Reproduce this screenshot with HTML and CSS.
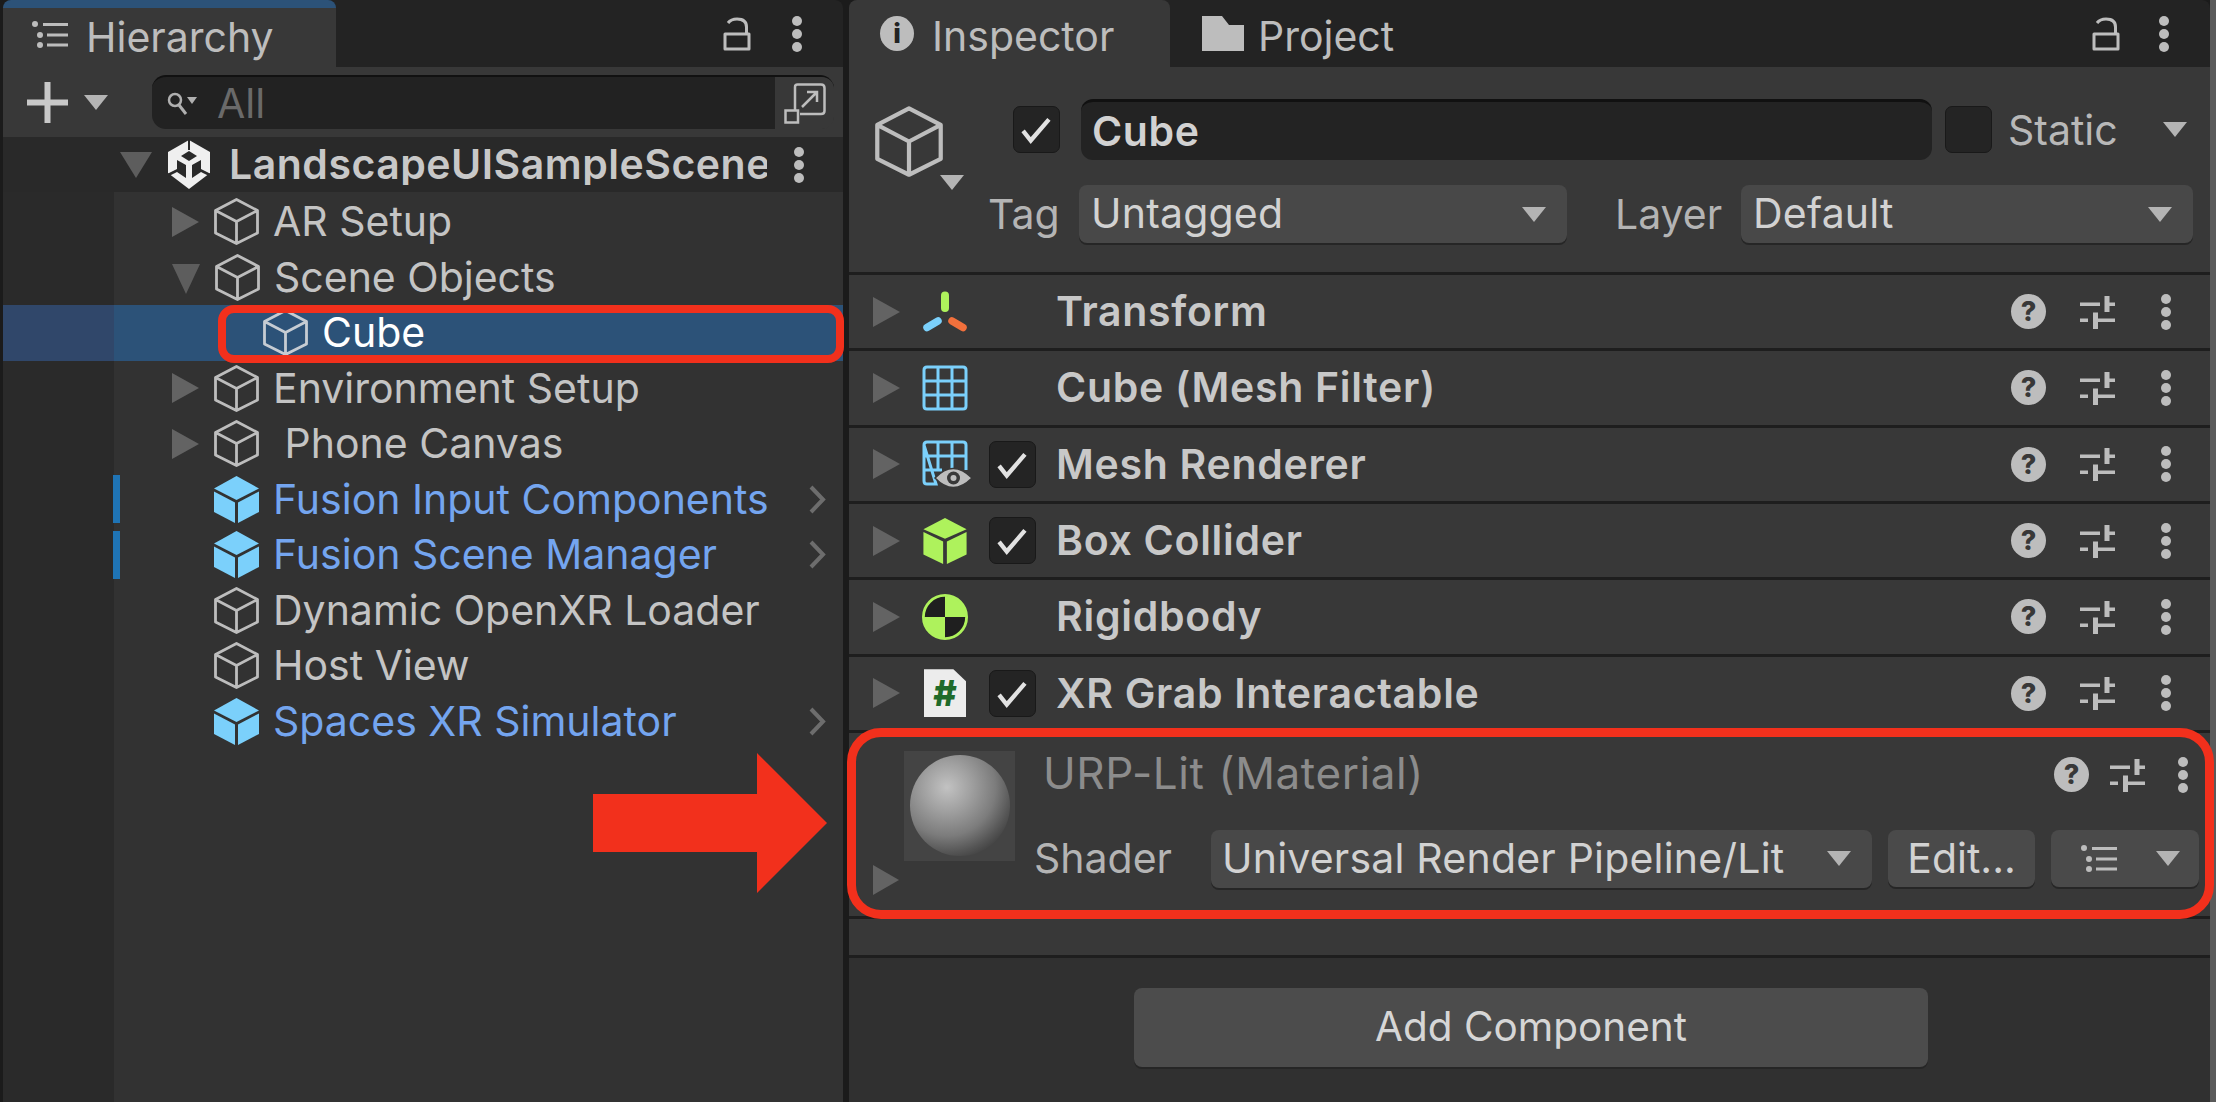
FILE: index.html
```html
<!DOCTYPE html>
<html lang="en">
<head>
<meta charset="utf-8">
<title>Unity Editor</title>
<link rel="stylesheet" href="styles.css">
</head>
<body>
<svg class="defs" width="0" height="0" aria-hidden="true">
  <symbol id="cube" viewBox="0 0 45 47"><path d="M22.500 1.500 43.500 12.500V35L22.500 45.500 1.500 35V12.500ZM1.500 12.500 22.500 23.500 43.500 12.500M22.500 23.500V45.500" fill="none" stroke="currentColor" stroke-width="2.800" stroke-linejoin="round"/></symbol>
  <symbol id="prefab" viewBox="0 0 45 47"><path d="M22.500 0 45 12.500 22.500 24 0 12.500Z" fill="#7bd0fb"/><path d="M0 15.500 21 26.500V47L0 36Z" fill="#7bd0fb"/><path d="M45 15.500 24 26.500V47L45 36Z" fill="#7bd0fb"/></symbol>
  <symbol id="dots" viewBox="0 0 12 36"><circle cx="6" cy="5" r="5"/><circle cx="6" cy="18" r="5"/><circle cx="6" cy="31" r="5"/></symbol>
  <symbol id="lock" viewBox="0 0 28 34"><path d="M5 6Q8 2 14 2 23.500 2 23.500 10V17M2 17H26V32H2Z" fill="none" stroke="currentColor" stroke-width="3" stroke-linejoin="round"/></symbol>
  <symbol id="list" viewBox="0 0 36 27"><circle cx="3" cy="3" r="3"/><circle cx="8" cy="14" r="3"/><circle cx="8" cy="24" r="3"/><path d="M11 2h25v3H11zM15 12.500h21v3H15zM15 22.500h21v3H15z"/></symbol>
  <symbol id="sliders" viewBox="0 0 35 34"><path d="M0 7.500H20V11H0ZM24.500 1H29.500V7.500H35V11H29.500V17H24.500ZM0 23.500H8V27H0ZM13 17.500H18V23.500H35V27H18V34H13Z"/></symbol>
  <symbol id="grid" viewBox="0 0 46 46"><path d="M2 5Q2 2 5 2H41Q44 2 44 5V41Q44 44 41 44H5Q2 44 2 41ZM2 16H44M2 30H44M16 2V44M30 2V44" fill="none" stroke="#7bd0fb" stroke-width="3"/></symbol>
</svg>

<div class="app">
  <section class="panel hierarchy">
    <header class="tabbar">
      <div class="tab tab-hier">
        <svg class="ic-list"><use href="#list"/></svg>
        <span>Hierarchy</span>
      </div>
      <div class="tab-tools tools-hier">
        <svg class="ic-lock"><use href="#lock"/></svg>
        <svg class="ic-dots"><use href="#dots"/></svg>
      </div>
    </header>
    <div class="toolbar">
      <svg class="ic-plus" viewBox="0 0 41 41"><path d="M17.500 0h6v17.500h17.500v6H23.500v17.500h-6V23.500H0v-6h17.500z"/></svg>
      <i class="tri-d tri-plus"></i>
      <div class="search">
        <svg class="ic-search" viewBox="0 0 32 23"><circle cx="8" cy="8" r="6" fill="none" stroke="currentColor" stroke-width="2.500"/><path d="M12 13l7 9" stroke="currentColor" stroke-width="3" fill="none"/><path d="M20 5h10l-5 7z"/></svg>
        <span class="search-text">All</span>
        <div class="search-btn">
          <svg class="ic-scene" viewBox="0 0 42 41"><path d="M11 27V4Q11 1.500 13.500 1.500H37Q40.500 1.500 40.500 5V28Q40.500 31 37 31H16" fill="none" stroke="currentColor" stroke-width="2.500"/><path d="M1.500 27.500H14V39.500H1.500Z" fill="none" stroke="currentColor" stroke-width="2.500"/><path d="M18 24 33 9M23 9H33V19" fill="none" stroke="currentColor" stroke-width="2.500"/></svg>
        </div>
      </div>
    </div>
    <div class="scene-row">
      <i class="tri-d tri-scene"></i>
      <svg class="ic-unity" viewBox="0 0 42 49"><path d="M21 0 42 12V33L21 49 0 33V12Z" fill="#efefef"/><path d="M20 0H22V10H20ZM21 11 29 16 21 21 13 16ZM9 20 18 25V35L9 29ZM33 20 24 25V35L33 29ZM0 33.500 9 29 18 35V38L9 32 0 36.500ZM42 33.500 33 29 24 35V38L33 32 42 36.500Z" fill="#292929"/></svg>
      <span class="scene-name">LandscapeUISampleScene</span>
      <svg class="ic-dots scene-dots"><use href="#dots"/></svg>
    </div>
    <div class="tree">
      <div class="row"><i class="mark"></i><i class="tri-r"></i><svg class="ic-cube"><use href="#cube"/></svg><span>AR Setup</span></div>
      <div class="row"><i class="mark"></i><i class="tri-d tri-row"></i><svg class="ic-cube"><use href="#cube"/></svg><span>Scene Objects</span></div>
      <div class="row selected"><i class="mark"></i><i class="no-tri"></i><svg class="ic-cube child"><use href="#cube"/></svg><span>Cube</span></div>
      <div class="row"><i class="mark"></i><i class="tri-r"></i><svg class="ic-cube"><use href="#cube"/></svg><span>Environment Setup</span></div>
      <div class="row"><i class="mark"></i><i class="tri-r"></i><svg class="ic-cube"><use href="#cube"/></svg><span class="pre"> Phone Canvas</span></div>
      <div class="row prefab"><i class="mark on"></i><i class="no-tri"></i><svg class="ic-cube"><use href="#prefab"/></svg><span>Fusion Input Components</span><svg class="chev" viewBox="0 0 18 29"><path d="M3 2 15 14.500 3 27" fill="none" stroke="currentColor" stroke-width="4"/></svg></div>
      <div class="row prefab"><i class="mark on"></i><i class="no-tri"></i><svg class="ic-cube"><use href="#prefab"/></svg><span>Fusion Scene Manager</span><svg class="chev" viewBox="0 0 18 29"><path d="M3 2 15 14.500 3 27" fill="none" stroke="currentColor" stroke-width="4"/></svg></div>
      <div class="row"><i class="mark"></i><i class="no-tri"></i><svg class="ic-cube"><use href="#cube"/></svg><span>Dynamic OpenXR Loader</span></div>
      <div class="row"><i class="mark"></i><i class="no-tri"></i><svg class="ic-cube"><use href="#cube"/></svg><span>Host View</span></div>
      <div class="row prefab"><i class="mark"></i><i class="no-tri"></i><svg class="ic-cube"><use href="#prefab"/></svg><span>Spaces XR Simulator</span><svg class="chev" viewBox="0 0 18 29"><path d="M3 2 15 14.500 3 27" fill="none" stroke="currentColor" stroke-width="4"/></svg></div>
    </div>
  </section>

  <section class="panel inspector">
    <header class="tabbar">
      <div class="tab tab-insp">
        <span class="ic-info">i</span>
        <span class="tab-label">Inspector</span>
      </div>
      <div class="tab tab-proj">
        <svg class="ic-folder" viewBox="0 0 42 35"><path d="M0 0H20L27 9H42V35H0Z"/></svg>
        <span class="tab-label">Project</span>
      </div>
      <div class="tab-tools tools-insp">
        <svg class="ic-lock"><use href="#lock"/></svg>
        <svg class="ic-dots"><use href="#dots"/></svg>
      </div>
    </header>

    <div class="go-head">
      <div class="go-icon">
        <svg class="ic-bigcube"><use href="#cube"/></svg>
        <i class="tri-d tri-go"></i>
      </div>
      <div class="go-fields">
        <div class="go-line1">
          <label class="check"><svg viewBox="0 0 46 47"><path d="M9 25 17 35 36 13"/></svg></label>
          <div class="namefield"><span>Cube</span></div>
          <label class="check empty"></label>
          <span class="static">Static</span>
          <i class="tri-d tri-static"></i>
        </div>
        <div class="go-line2">
          <span class="lbl lbl-tag">Tag</span>
          <div class="dd dd-tag"><span>Untagged</span><i class="tri-d tri-dd"></i></div>
          <span class="lbl lbl-layer">Layer</span>
          <div class="dd dd-layer"><span>Default</span><i class="tri-d tri-dd"></i></div>
        </div>
      </div>
    </div>

    <div class="comp">
      <i class="tri-r"></i>
      <svg class="c-icon" viewBox="0 0 46 42"><g fill="none" stroke-linecap="round"><path d="M23 4.500V17" stroke="#aef25c" stroke-width="8"/><path d="M5 36.500 16 30" stroke="#7bd0fb" stroke-width="7.500"/><path d="M30 30 41 36.500" stroke="#f2703c" stroke-width="7.500"/></g></svg>
      <i class="c-nocheck"></i>
      <span class="c-name">Transform</span>
      <div class="c-tools"><span class="ic-help">?</span><svg class="ic-sliders"><use href="#sliders"/></svg><svg class="ic-dots"><use href="#dots"/></svg></div>
    </div>
    <div class="comp">
      <i class="tri-r"></i>
      <svg class="c-icon"><use href="#grid"/></svg>
      <i class="c-nocheck"></i>
      <span class="c-name">Cube (Mesh Filter)</span>
      <div class="c-tools"><span class="ic-help">?</span><svg class="ic-sliders"><use href="#sliders"/></svg><svg class="ic-dots"><use href="#dots"/></svg></div>
    </div>
    <div class="comp">
      <i class="tri-r"></i>
      <svg class="c-icon c-icon-wide" viewBox="0 0 50 48"><path d="M2 5Q2 2 5 2H41Q44 2 44 5V30M14 44H5Q2 44 2 41V5ZM2 16H44M2 30H20M16 2V30M30 2V30" fill="none" stroke="#7bd0fb" stroke-width="3"/><path d="M13 38Q31 19 50 38 31 57 13 38Z" fill="#bdbdbd" stroke="#383838" stroke-width="1.500"/><circle cx="31.500" cy="38" r="6.500" fill="#383838"/><circle cx="31.500" cy="38" r="3" fill="#bdbdbd"/></svg>
      <label class="check c-check"><svg viewBox="0 0 46 47"><path d="M9 25 17 35 36 13"/></svg></label>
      <span class="c-name">Mesh Renderer</span>
      <div class="c-tools"><span class="ic-help">?</span><svg class="ic-sliders"><use href="#sliders"/></svg><svg class="ic-dots"><use href="#dots"/></svg></div>
    </div>
    <div class="comp">
      <i class="tri-r"></i>
      <svg class="c-icon" viewBox="0 0 46 49"><path d="M23 0 46 12 23 22 0 12Z" fill="#aef25c"/><path d="M0 15 21 25V49L0 39Z" fill="#aef25c"/><path d="M46 15 25 25V49L46 39Z" fill="#aef25c"/></svg>
      <label class="check c-check"><svg viewBox="0 0 46 47"><path d="M9 25 17 35 36 13"/></svg></label>
      <span class="c-name">Box Collider</span>
      <div class="c-tools"><span class="ic-help">?</span><svg class="ic-sliders"><use href="#sliders"/></svg><svg class="ic-dots"><use href="#dots"/></svg></div>
    </div>
    <div class="comp">
      <i class="tri-r"></i>
      <svg class="c-icon" viewBox="0 0 49 49"><circle cx="24.500" cy="24.500" r="23" fill="#1f1f1f" stroke="#aef25c" stroke-width="3"/><path d="M24.500 2A22.500 22.500 0 0 1 47 24.500H24.500ZM24.500 47A22.500 22.500 0 0 1 2 24.500H24.500Z" fill="#aef25c"/></svg>
      <i class="c-nocheck"></i>
      <span class="c-name">Rigidbody</span>
      <div class="c-tools"><span class="ic-help">?</span><svg class="ic-sliders"><use href="#sliders"/></svg><svg class="ic-dots"><use href="#dots"/></svg></div>
    </div>
    <div class="comp">
      <i class="tri-r"></i>
      <div class="c-script"><span>#</span></div>
      <label class="check c-check"><svg viewBox="0 0 46 47"><path d="M9 25 17 35 36 13"/></svg></label>
      <span class="c-name">XR Grab Interactable</span>
      <div class="c-tools"><span class="ic-help">?</span><svg class="ic-sliders"><use href="#sliders"/></svg><svg class="ic-dots"><use href="#dots"/></svg></div>
    </div>

    <div class="material">
      <i class="tri-r tri-mat"></i>
      <div class="preview"><div class="sphere"></div></div>
      <div class="mat-body">
        <div class="mat-title">
          <span class="mat-name">URP-Lit</span><span class="mat-name mat-kind">(Material)</span>
          <div class="c-tools mat-tools"><span class="ic-help">?</span><svg class="ic-sliders"><use href="#sliders"/></svg><svg class="ic-dots"><use href="#dots"/></svg></div>
        </div>
        <div class="mat-shader">
          <span class="lbl lbl-shader">Shader</span>
          <div class="dd dd-shader"><span>Universal Render Pipeline/Lit</span><i class="tri-d tri-dd"></i></div>
          <div class="btn btn-edit">Edit...</div>
          <div class="btn btn-list"><svg class="ic-list2"><use href="#list"/></svg><i class="tri-d tri-dd"></i></div>
        </div>
      </div>
    </div>
    <div class="spacer"></div>
    <div class="footer">
      <div class="add-btn">Add Component</div>
    </div>
  </section>
  <div class="edge"></div>
</div>

<div class="anno anno-cube"></div>
<div class="anno anno-mat"></div>
<svg class="anno-arrow" viewBox="0 0 234 140"><path d="M0 41H164V0L234 70 164 140V99H0Z"/></svg>
</body>
</html>
```
FILE: styles.css
```css
* { box-sizing: border-box; }
html, body { margin: 0; height: 100%; }
body {
  width: 2216px; height: 1102px; overflow: hidden; position: relative;
  background: #1b1b1b; color: #c4c4c4;
  font-family: Inter, "Noto Sans", "Liberation Sans", sans-serif;
  font-size: 41px; line-height: 1;
}
i { display: block; font-style: normal; }
svg { display: block; flex: none; fill: currentColor; }
.defs { position: absolute; }
.app { display: flex; height: 1102px; padding: 0 0 0 3px; }
.panel { display: flex; flex-direction: column; height: 100%; }
.hierarchy { width: 840px; }
.inspector { width: 1361px; margin-left: 6px; flex: none; }
.edge { width: 6px; height: 1102px; background: #5a5a5a; flex: none; }

/* triangles */
.tri-d { width: 0; height: 0; border-style: solid; border-color: #b4b4b4 transparent transparent; flex: none; }
.tri-r { width: 0; height: 0; border-style: solid; border-width: 15px 0 15px 27px; border-color: transparent transparent transparent #636363; flex: none; }

/* tabs */
.tabbar { height: 67px; display: flex; background: #232323; flex: none; border-radius: 8px 8px 0 0; }
.tab { display: flex; align-items: center; height: 67px; flex: none; }
.tab-hier { width: 333px; padding-left: 29px; background: #383838; border-top: 8px solid #2c5278; border-radius: 8px 8px 0 0; gap: 18px; }
.tab-hier span { color: #bdbdbd; }
.ic-list { width: 36px; height: 27px; margin-top: -6px; color: #bdbdbd; }
.tab-insp { width: 321px; padding-left: 31px; background: #383838; border-radius: 8px 8px 0 0; gap: 18px; }
.tab-label { margin-top: 6px; color: #bdbdbd; }
.ic-info { width: 34px; height: 35px; border-radius: 50%; background: #bdbdbd; color: #232323; font-size: 27px; font-weight: 800; display: flex; align-items: center; justify-content: center; flex: none; }
.tab-proj { padding-left: 32px; gap: 14px; }
.ic-folder { width: 42px; height: 35px; color: #bdbdbd; }
.tab-tools { margin-left: auto; display: flex; align-items: center; height: 67px; color: #bdbdbd; }
.tools-hier { padding-right: 40px; gap: 40px; }
.tools-insp { padding-right: 40px; gap: 38px; }
.ic-lock { width: 28px; height: 34px; }
.ic-dots { width: 12px; height: 36px; color: #bdbdbd; flex: none; }

/* toolbar */
.toolbar { height: 70px; background: #383838; display: flex; align-items: center; padding-left: 24px; flex: none; }
.ic-plus { width: 41px; height: 41px; color: #c8c8c8; }
.tri-plus { border-width: 15px 12px 0; margin-left: 16px; }
.search { margin-left: 44px; width: 682px; height: 54px; background: #222; border-radius: 14px; display: flex; align-items: center; border-top: 2px solid #111; }
.ic-search { width: 32px; height: 23px; margin-left: 15px; color: #b0b0b0; }
.search-text { margin-left: 18px; color: #6a6a6a; }
.search-btn { margin-left: auto; width: 59px; height: 52px; background: #383838; border-radius: 0 12px 12px 0; display: flex; align-items: center; justify-content: center; color: #bdbdbd; }
.ic-scene { width: 42px; height: 41px; }

/* scene row */
.scene-row { height: 55px; background: #292929; display: flex; align-items: center; padding-left: 117px; flex: none; }
.tri-scene { border-width: 26px 16px 0; border-top-color: #5d5d5d; }
.ic-unity { width: 42px; height: 49px; margin-left: 16px; }
.scene-name { margin-left: 19px; width: 538px; overflow: hidden; white-space: nowrap; font-weight: 600; letter-spacing: .5px; color: #c8c8c8; }
.scene-dots { margin-left: 26px; }

/* tree */
.tree { flex: 1; padding-top: 2px; background: linear-gradient(90deg, #2a2a2a 111px, #323232 111px); }
.row { height: 55.500px; display: flex; align-items: center; padding-left: 110px; position: relative; }
.mark { width: 7px; height: 48px; margin-right: 52px; flex: none; }
.mark.on { background: #1f74b5; }
.no-tri { width: 27px; flex: none; }
.tri-row { border-width: 30px 14px 0; border-top-color: #5d5d5d; margin-top: 4px; }
.ic-cube { width: 45px; height: 47px; margin: 0 14px 0 15px; color: #bdbdbd; }
.ic-cube.child { margin-left: 64px; margin-right: 14px; }
.row.selected { background: linear-gradient(90deg, #30476a 111px, #2c5278 111px); color: #fff; }
.row.selected .ic-cube { color: #c6ccd3; }
.row.prefab span { color: #74a5ef; }
.pre { white-space: pre; }
.chev { position: absolute; left: 805px; width: 18px; height: 29px; color: #6d6d6d; }

/* inspector head */
.go-head { height: 208px; background: #383838; display: flex; border-bottom: 3px solid #1e1e1e; flex: none; }
.go-icon { width: 141px; padding: 39px 0 0 26px; position: relative; flex: none; }
.ic-bigcube { width: 68px; height: 71px; color: #bdbdbd; }
.tri-go { position: absolute; left: 91px; top: 108px; border-width: 15px 12.500px 0; }
.go-fields { flex: 1; padding-top: 32px; }
.go-line1 { display: flex; align-items: center; height: 61px; padding-left: 23px; }
.check { width: 47px; height: 47px; background: #242424; border: 1px solid #191919; border-radius: 7px; flex: none; display: block; }
.check svg { width: 100%; height: 100%; fill: none; stroke: #e2e2e2; stroke-width: 4.500; }
.namefield { margin-left: 21px; width: 851px; height: 61px; background: #232323; border-top: 3px solid #111; border-radius: 12px; padding-left: 11px; display: flex; align-items: center; font-weight: 600; letter-spacing: .6px; color: #d2d2d2; flex: none; }
.namefield span { margin-top: 1px; }
.check.empty { margin-left: 13px; }
.static { margin-left: 16px; margin-top: 2px; color: #b8b8b8; }
.tri-static { margin-left: 45px; border-width: 15px 12.500px 0; }
.go-line2 { display: flex; align-items: center; height: 58px; margin-top: 25px; }
.lbl { flex: none; color: #b4b4b4; }
.lbl-tag { width: 73px; margin-left: -2px; }
.lbl-layer { margin-left: 48px; width: 109px; }
.dd { display: flex; align-items: center; height: 58px; background: #484848; border-radius: 8px; box-shadow: 0 2px 0 #262626; padding: 0 21px 0 12px; color: #d2d2d2; flex: none; letter-spacing: .2px; white-space: nowrap; }
.dd span { margin-top: -1px; }
.dd .tri-dd { margin-left: auto; border-width: 15px 12.500px 0; }
.dd-tag { margin-left: 18px; width: 488px; }
.dd-layer { margin-left: 17px; width: 452px; }

/* components */
.comp { height: 76.330px; background: #383838; border-bottom: 3px solid #1e1e1e; display: flex; align-items: center; padding-left: 24px; flex: none; position: relative; }
.c-icon { width: 46px; height: 46px; margin-left: 22px; }
.c-icon-wide { width: 50px; height: 48px; margin-right: -4px; }
.c-script { width: 42px; height: 48px; margin: 0 2px 0 24px; background: #ececec; clip-path: polygon(0 0, 70% 0, 100% 25%, 100% 100%, 0 100%); color: #1f6a2a; font-weight: 800; font-size: 36px; display: flex; align-items: center; justify-content: center; flex: none; }
.c-nocheck { width: 47px; margin-left: 21px; flex: none; }
.c-check { margin-left: 21px; }
.c-name { margin-left: 20px; font-weight: 600; letter-spacing: .7px; color: #c8c8c8; }
.c-tools { margin-left: auto; display: flex; align-items: center; padding-right: 38px; }
.ic-help { width: 35px; height: 35px; border-radius: 50%; background: #bdbdbd; color: #383838; font-size: 27px; font-weight: 800; display: flex; align-items: center; justify-content: center; flex: none; }
.ic-sliders { width: 35px; height: 34px; margin-left: 34px; color: #bdbdbd; }
.c-tools .ic-dots { margin-left: 45px; }

/* material */
.material { height: 186px; background: #383838; border-bottom: 3px solid #1e1e1e; display: flex; padding: 18px 0 0 24px; flex: none; }
.tri-mat { align-self: flex-end; margin-bottom: 21px; border-width: 15.500px 0 15.500px 26px; }
.preview { width: 111px; height: 110px; margin-left: 5px; background: #444; flex: none; padding: 4px 6px; }
.sphere { width: 100px; height: 101px; border-radius: 50%; background: radial-gradient(circle at 37% 32%, #c2c2c2 0, #a0a0a0 26%, #7c7c7c 52%, #555 70%, #3a3a3a 84%, #353535 100%); }
.mat-body { flex: 1; min-width: 0; }
.mat-title { height: 50px; padding-left: 28px; display: flex; align-items: center; color: #8c8c8c; }
.mat-name { font-size: 44px; letter-spacing: .6px; margin-top: -5px; }
.mat-kind { margin-left: 14px; }
.mat-tools { padding-right: 21px; margin-top: -2px; }
.mat-tools .ic-sliders { margin-left: 21px; }
.mat-tools .ic-dots { margin-left: 32px; }
.mat-shader { display: flex; align-items: center; margin-top: 29px; padding-left: 19px; }
.lbl-shader { width: 177px; }
.dd-shader { width: 661px; padding-left: 11px; }
.btn { height: 57px; background: #4a4a4a; border-radius: 8px; box-shadow: 0 2px 0 #262626; flex: none; display: flex; align-items: center; color: #d2d2d2; }
.btn-edit { margin-left: 16px; width: 147px; justify-content: center; }
.btn-list { margin-left: 16px; width: 148px; padding: 0 19px 0 30px; justify-content: space-between; }
.ic-list2 { width: 36px; height: 27px; color: #bdbdbd; }
.btn .tri-dd { border-width: 15px 12.500px 0; }
.spacer { height: 39px; background: #383838; border-bottom: 3px solid #1e1e1e; flex: none; }
.footer { flex: 1; background: #303030; padding: 30px 0 0 285px; }
.add-btn { width: 794px; height: 79px; background: #4c4c4c; border-radius: 8px; box-shadow: 0 2px 0 #262626; display: flex; align-items: center; justify-content: center; color: #d6d6d6; font-size: 40.500px; }

/* annotations */
.anno { position: absolute; border: 8px solid #f2301c; }
.anno-cube { left: 218px; top: 305px; width: 626px; height: 58px; border-radius: 16px; }
.anno-mat { left: 847px; top: 728px; width: 1367px; height: 191px; border-width: 9px; border-radius: 34px; }
.anno-arrow { position: absolute; left: 593px; top: 753px; width: 234px; height: 140px; fill: #f2301c; }
```
